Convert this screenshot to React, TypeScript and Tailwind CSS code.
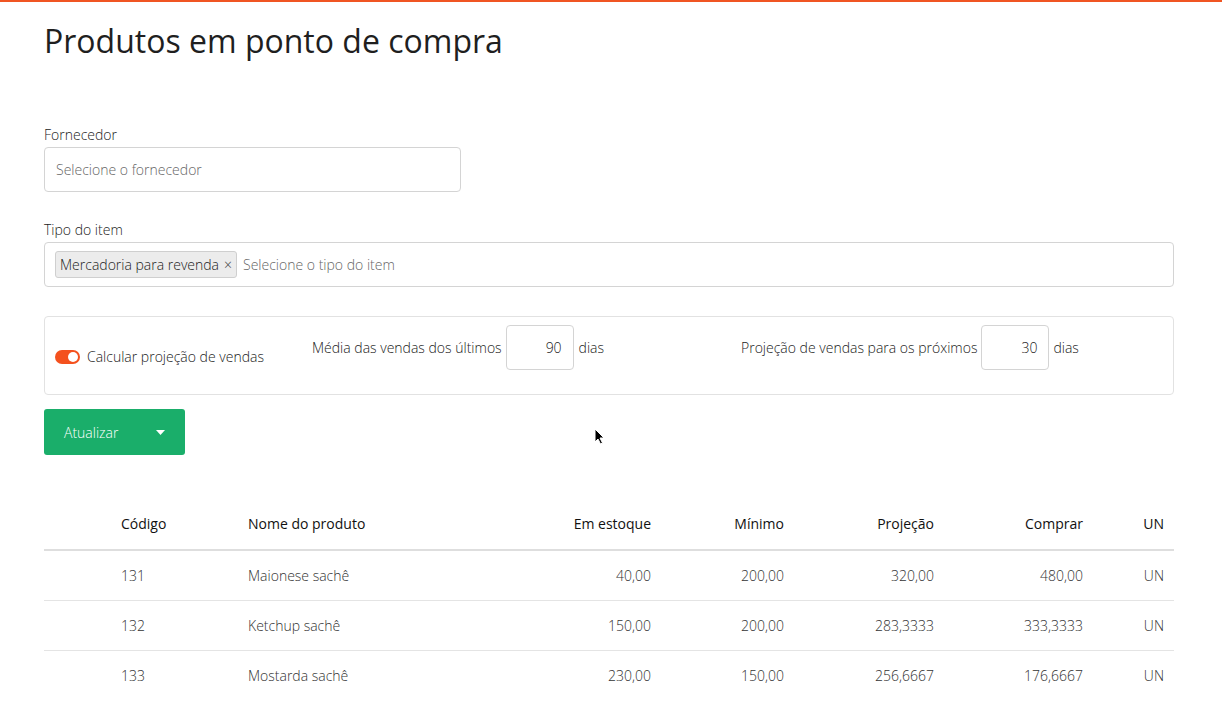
import React from "react";

const rows = [
  { codigo: "131", nome: "Maionese sachê", estoque: "40,00", minimo: "200,00", projecao: "320,00", comprar: "480,00", un: "UN" },
  { codigo: "132", nome: "Ketchup sachê", estoque: "150,00", minimo: "200,00", projecao: "283,3333", comprar: "333,3333", un: "UN" },
  { codigo: "133", nome: "Mostarda sachê", estoque: "230,00", minimo: "150,00", projecao: "256,6667", comprar: "176,6667", un: "UN" },
];

export default function App() {
  return (
    <div className="relative min-h-[714px] bg-white text-[#212529] font-['Open_Sans',sans-serif] border-t-2 border-[#f05523]">
      <div className="px-[44px] pr-[48px]">
        <h1 className="text-[32px] leading-[40px] font-normal pt-[19px] text-[#1f1f1f]">Produtos em ponto de compra</h1>

        <div className="mt-[64px]">
          <label className="block text-[14px] leading-[20px] font-light text-[#222] mb-[2px]">Fornecedor</label>
          <div className="w-[417px] h-[45px] border border-[#d4d4d4] rounded-[4px] flex items-center px-[11px] text-[14px] font-light text-[#666]">
            Selecione o fornecedor
          </div>
        </div>

        <div className="mt-[28px]">
          <label className="block text-[14px] leading-[20px] font-light text-[#222] mb-[2px]">Tipo do item</label>
          <div className="h-[45px] border border-[#d4d4d4] rounded-[4px] flex items-center px-[10px] gap-[6px] text-[14px] font-light">
            <span className="h-[27px] flex items-center gap-[5px] px-[4px] bg-[#ececec] border border-[#cfcfcf] rounded-[3px] text-[#222]">
              Mercadoria para revenda <span className="text-[14px] text-[#444]">×</span>
            </span>
            <span className="text-[#666]">Selecione o tipo do item</span>
          </div>
        </div>

        <div className="mt-[29px] h-[79px] border border-[#e2e2e2] rounded-[4px] flex items-start pt-[8px] px-[10px] text-[14px] font-light text-[#222]">
          <div className="w-[257px] h-[45px] mt-[9px] flex items-center gap-[7px]">
            <span className="relative w-[25px] h-[14px] rounded-full bg-[#f4511e]">
              <span className="absolute right-[2px] top-[2px] w-[10px] h-[10px] rounded-full bg-white" />
            </span>
            <span>Calcular projeção de vendas</span>
          </div>
          <div className="w-[429px] flex items-center">
            <span className="mr-[4px]">Média das vendas dos últimos</span>
            <span className="w-[68px] h-[45px] border border-[#d4d4d4] rounded-[4px] flex items-center justify-end pr-[11px]">90</span>
            <span className="ml-[5px]">dias</span>
          </div>
          <div className="flex items-center">
            <span className="mr-[4px]">Projeção de vendas para os próximos</span>
            <span className="w-[68px] h-[45px] border border-[#d4d4d4] rounded-[4px] flex items-center justify-end pr-[11px]">30</span>
            <span className="ml-[4px]">dias</span>
          </div>
        </div>

        <div className="mt-[14px]">
          <button className="w-[141px] h-[46px] bg-[#1aae6a] rounded-[3px] text-white text-[14px] font-light flex items-center pl-[20px] pr-[20px] justify-between">
            <span>Atualizar</span>
            <svg width="9" height="5" viewBox="0 0 9 5"><path d="M0 0h9L4.5 5z" fill="white" /></svg>
          </button>
        </div>

        <table className="mt-[43px] w-full text-[14px] border-collapse">
          <thead>
            <tr className="border-b-2 border-[#dedede] text-[#111]">
              <th className="w-[77px]" />
              <th className="w-[127px] text-left font-normal h-[52px] pl-0">Código</th>
              <th className="text-left font-normal">Nome do produto</th>
              <th className="w-[140px] text-right font-normal pr-[10px]">Em estoque</th>
              <th className="w-[133px] text-right font-normal pr-[10px]">Mínimo</th>
              <th className="w-[150px] text-right font-normal pr-[10px]">Projeção</th>
              <th className="w-[149px] text-right font-normal pr-[10px]">Comprar</th>
              <th className="w-[81px] text-right font-normal pr-[10px]">UN</th>
            </tr>
          </thead>
          <tbody className="text-[#333] font-light">
            {rows.map((r, i) => (
              <tr key={r.codigo} className={i < rows.length - 1 ? "border-b border-[#e4e4e4]" : ""}>
                <td />
                <td className="h-[50px]">{r.codigo}</td>
                <td>{r.nome}</td>
                <td className="text-right pr-[10px]">{r.estoque}</td>
                <td className="text-right pr-[10px]">{r.minimo}</td>
                <td className="text-right pr-[10px]">{r.projecao}</td>
                <td className="text-right pr-[10px]">{r.comprar}</td>
                <td className="text-right pr-[10px]">{r.un}</td>
              </tr>
            ))}
          </tbody>
        </table>
      </div>

      {/* mouse cursor */}
      <svg className="absolute left-[594px] top-[426px]" width="11" height="17" viewBox="0 0 11 17">
        <path d="M1 1v13l3-3 2.5 5 2-1-2.5-5H10z" fill="black" stroke="white" strokeWidth="1" />
      </svg>
    </div>
  );
}
